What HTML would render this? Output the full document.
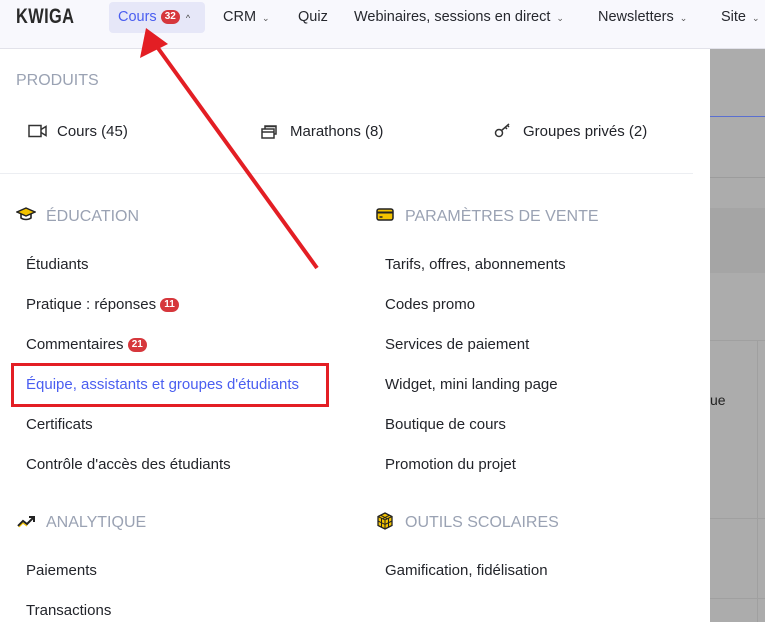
<!DOCTYPE html>
<html><head><meta charset="utf-8"><style>
*{margin:0;padding:0;box-sizing:border-box}
body{width:765px;height:622px;overflow:hidden;background:#fff;font-family:"Liberation Sans",sans-serif;color:#22242a;position:relative}
.a{position:absolute;white-space:nowrap}
.hdr{position:absolute;left:0;top:0;width:765px;height:49px;background:#f8f8fd;border-bottom:1px solid #e2e2ea}
.nav{font-size:14.5px;top:9px;color:#26282e}
.chev{font-size:9px;color:#555;margin-left:6px}
.badge{display:inline-block;background:#d6373c;color:#fff;font-size:10px;font-weight:bold;border-radius:7px;padding:1px 4px;line-height:12px;vertical-align:2px}
.it{font-size:15px;color:#22242a}
.sec{font-size:16px;color:#9aa2b3}
.gray{position:absolute;left:710px;top:49px;width:55px;height:573px;background:#acacac}
</style></head><body>
<div class="hdr"></div>
<div class="a" style="left:16px;top:5px;font-size:21px;font-weight:bold;color:#2a2a2a;letter-spacing:0.5px;transform:scaleX(0.78);transform-origin:left">KWIGA</div>
<div class="a" style="left:109px;top:2px;width:96px;height:31px;background:#e6e7f8;border-radius:4px"></div>
<div class="a nav" style="left:118px;color:#4a5ef0">Cours <span class="badge">32</span><span class="chev" style="color:#444">^</span></div>
<div class="a nav" style="left:223px">CRM<span class="chev">⌄</span></div>
<div class="a nav" style="left:298px">Quiz</div>
<div class="a nav" style="left:354px">Webinaires, sessions en direct<span class="chev">⌄</span></div>
<div class="a nav" style="left:598px">Newsletters<span class="chev">⌄</span></div>
<div class="a nav" style="left:721px">Site<span class="chev">⌄</span></div>

<div class="gray"></div>
<div class="a" style="left:710px;top:116px;width:55px;height:1px;background:#5a6fd0"></div>
<div class="a" style="left:710px;top:177px;width:55px;height:1px;background:#9c9c9c"></div>
<div class="a" style="left:710px;top:208px;width:55px;height:65px;background:#a5a5a5"></div>
<div class="a" style="left:710px;top:340px;width:55px;height:1px;background:#a0a0a0"></div>
<div class="a" style="left:757px;top:340px;width:1px;height:282px;background:#a0a0a0"></div>
<div class="a" style="left:710px;top:518px;width:55px;height:1px;background:#a0a0a0"></div>
<div class="a" style="left:710px;top:598px;width:55px;height:1px;background:#a0a0a0"></div>
<div class="a" style="left:710px;top:392px;font-size:14px;color:#222">ue</div>

<div class="a sec" style="left:16px;top:72px">PRODUITS</div>
<svg class="a" style="left:28px;top:124px" width="20" height="14" viewBox="0 0 20 14"><rect x="1" y="1.5" width="12" height="11" fill="none" stroke="#333" stroke-width="1.5"/><path d="M13 5.5l5-3v9l-5-3" fill="none" stroke="#333" stroke-width="1.5"/></svg>
<div class="a it" style="left:57px;top:123px">Cours (45)</div>
<svg class="a" style="left:261px;top:123px" width="18" height="16" viewBox="0 0 18 16"><rect x="1" y="6" width="12" height="9" fill="none" stroke="#333" stroke-width="1.5"/><path d="M1 9h12M4 6V3h11v8h-2M4 3.5h11" fill="none" stroke="#333" stroke-width="1.5"/></svg>
<div class="a it" style="left:290px;top:123px">Marathons (8)</div>
<svg class="a" style="left:494px;top:122px" width="18" height="16" viewBox="0 0 18 16"><circle cx="5" cy="11" r="3.5" fill="none" stroke="#333" stroke-width="1.5"/><path d="M7.5 8.5L15 2M11 5l2 2M13 3l2 2" fill="none" stroke="#333" stroke-width="1.5"/></svg>
<div class="a it" style="left:523px;top:123px">Groupes privés (2)</div>
<div class="a" style="left:0;top:173px;width:693px;height:1px;background:#eceef2"></div>

<svg class="a" style="left:16px;top:207px" width="20" height="14" viewBox="0 0 20 14"><path d="M10 1L19 5 10 9 1 5z" fill="#f2c200" stroke="#222" stroke-width="1.4"/><path d="M5 7v4c3 2 7 2 10 0V7" fill="none" stroke="#222" stroke-width="1.6"/></svg>
<div class="a sec" style="left:46px;top:208px">ÉDUCATION</div>
<div class="a it" style="left:26px;top:256px">Étudiants</div>
<div class="a it" style="left:26px;top:296px">Pratique : réponses <span class="badge">11</span></div>
<div class="a it" style="left:26px;top:336px">Commentaires <span class="badge">21</span></div>
<div class="a it" style="left:26px;top:376px;color:#4a5ef0">Équipe, assistants et groupes d'étudiants</div>
<div class="a it" style="left:26px;top:416px">Certificats</div>
<div class="a it" style="left:26px;top:456px">Contrôle d'accès des étudiants</div>

<svg class="a" style="left:17px;top:515px" width="20" height="13" viewBox="0 0 20 13"><path d="M1 11l5-5 4 3 7-7" fill="none" stroke="#222" stroke-width="2"/><path d="M12 2h5v5" fill="none" stroke="#222" stroke-width="2"/><path d="M2 12l4-4 4 3" fill="none" stroke="#f2c200" stroke-width="1.2"/></svg>
<div class="a sec" style="left:46px;top:514px">ANALYTIQUE</div>
<div class="a it" style="left:26px;top:562px">Paiements</div>
<div class="a it" style="left:26px;top:602px">Transactions</div>

<svg class="a" style="left:376px;top:208px" width="18" height="13" viewBox="0 0 18 13"><rect x="1" y="1" width="16" height="11" rx="2" fill="#f2c200" stroke="#222" stroke-width="1.5"/><path d="M1 4.5h16" stroke="#222" stroke-width="2"/><path d="M3.5 9h3" stroke="#222" stroke-width="1.5"/></svg>
<div class="a sec" style="left:405px;top:208px">PARAMÈTRES DE VENTE</div>
<div class="a it" style="left:385px;top:256px">Tarifs, offres, abonnements</div>
<div class="a it" style="left:385px;top:296px">Codes promo</div>
<div class="a it" style="left:385px;top:336px">Services de paiement</div>
<div class="a it" style="left:385px;top:376px">Widget, mini landing page</div>
<div class="a it" style="left:385px;top:416px">Boutique de cours</div>
<div class="a it" style="left:385px;top:456px">Promotion du projet</div>
<svg class="a" style="left:376px;top:512px" width="18" height="18" viewBox="0 0 18 18"><path d="M9 1l7 3.5v9L9 17 2 13.5v-9z" fill="#f2c200" stroke="#222" stroke-width="1.3"/><path d="M2 4.5L9 8l7-3.5M9 8v9M4.5 3.2l7 3.6M13.5 3.2l-7 3.6M2 9l7 3.5L16 9M5.5 6.3v9M12.5 6.3v9" fill="none" stroke="#222" stroke-width="1"/></svg>
<div class="a sec" style="left:405px;top:514px">OUTILS SCOLAIRES</div>
<div class="a it" style="left:385px;top:562px">Gamification, fidélisation</div>

<div class="a" style="left:11px;top:363px;width:318px;height:44px;border:3px solid #e31e24"></div>
<svg class="a" style="left:0;top:0" width="765" height="622"><line x1="317" y1="268" x2="155" y2="44" stroke="#e31e24" stroke-width="4"/><polygon points="146,28 140,58 168,44" fill="#e31e24"/></svg>
</body></html>
